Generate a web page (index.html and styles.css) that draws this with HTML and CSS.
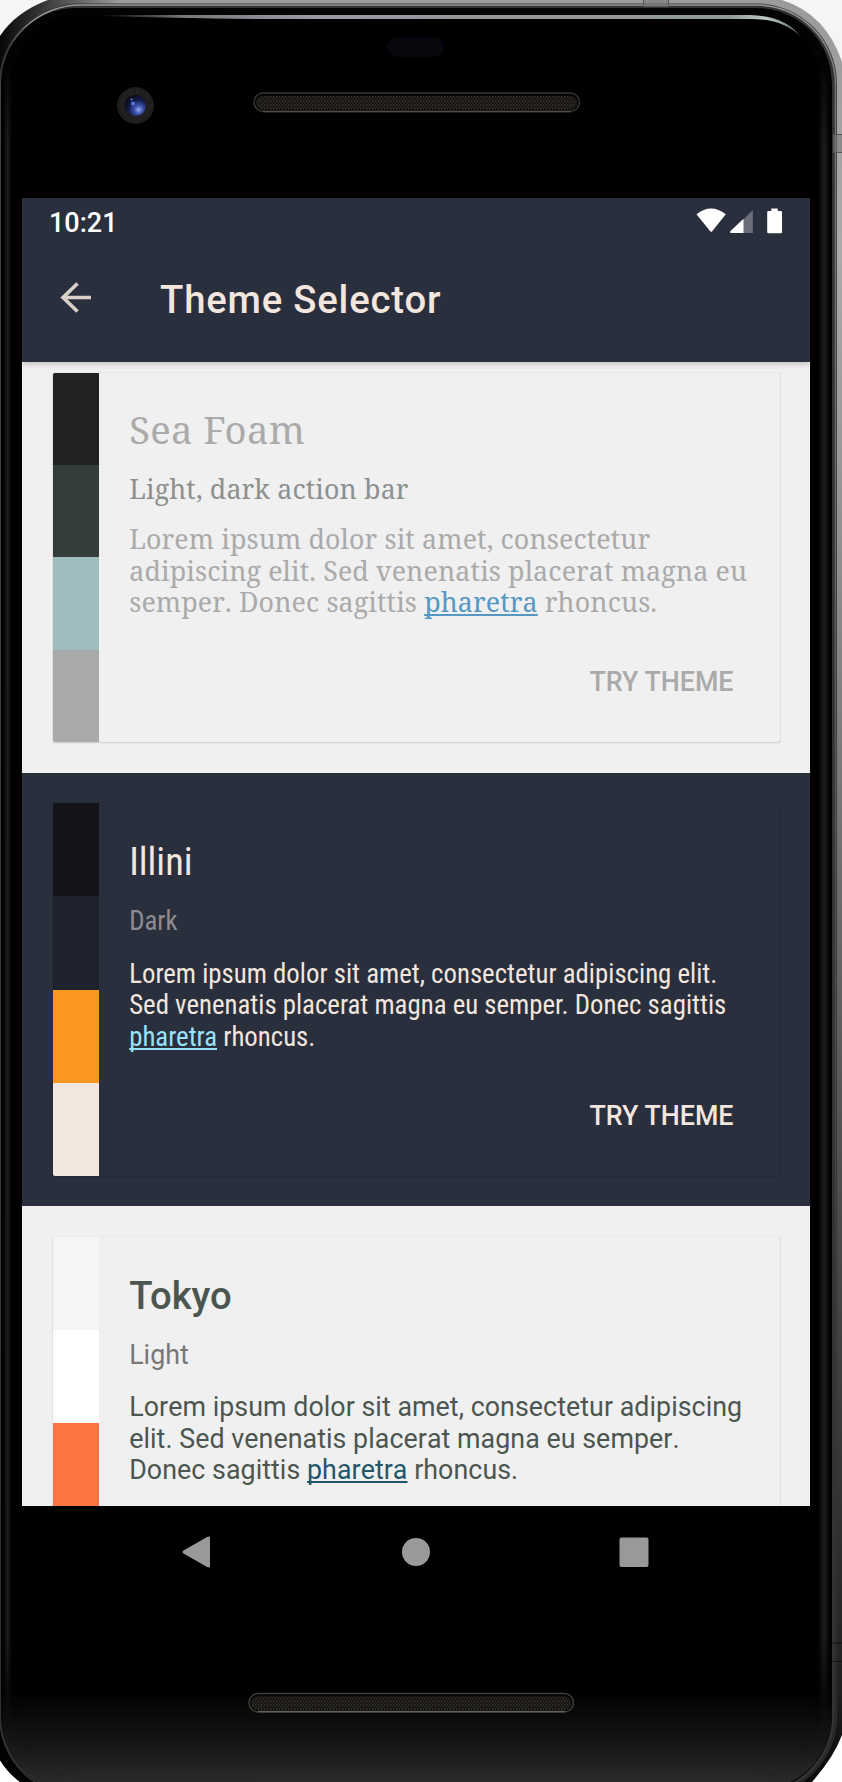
FILE: index.html
```html
<!DOCTYPE html>
<html lang="en">
<head>
<meta charset="utf-8">
<title>Theme Selector</title>
<link rel="stylesheet" href="styles.css">
</head>
<body>
<main class="phone">
  <svg class="frame" viewBox="0 0 842 1782" aria-hidden="true">
    <defs>
      <linearGradient id="metal" x1="0" y1="0" x2="0" y2="1782" gradientUnits="userSpaceOnUse">
        <stop offset="0" stop-color="#999b9c"/><stop offset=".14" stop-color="#aaa"/><stop offset=".3" stop-color="#919191"/><stop offset=".5" stop-color="#6c6c6c"/><stop offset=".65" stop-color="#505050"/><stop offset=".83" stop-color="#353535"/><stop offset=".95" stop-color="#202020"/><stop offset="1" stop-color="#080808"/>
      </linearGradient>
      <linearGradient id="shade" x1="0" y1="0" x2="120" y2="0" gradientUnits="userSpaceOnUse">
        <stop offset="0" stop-color="#000" stop-opacity=".95"/><stop offset=".3" stop-color="#000" stop-opacity=".7"/><stop offset="1" stop-color="#000" stop-opacity="0"/>
      </linearGradient>
      <linearGradient id="rim" x1="0" y1="0" x2="0" y2="1782" gradientUnits="userSpaceOnUse">
        <stop offset="0" stop-color="#999"/><stop offset=".05" stop-color="#777"/><stop offset=".12" stop-color="#777"/><stop offset="1" stop-color="#222"/>
      </linearGradient>
      <linearGradient id="chin" x1="0" y1="1690" x2="0" y2="1782" gradientUnits="userSpaceOnUse">
        <stop offset="0" stop-color="#000"/><stop offset=".6" stop-color="#161616"/><stop offset="1" stop-color="#2b2b2b"/>
      </linearGradient>
      <linearGradient id="side">
        <stop offset="0" stop-color="#000"/><stop offset=".5" stop-color="#1d1d1d"/><stop offset="1" stop-color="#000"/>
      </linearGradient>
      <linearGradient id="fade" x1="0" y1="60" x2="0" y2="1720" gradientUnits="userSpaceOnUse">
        <stop offset="0" stop-color="#000"/><stop offset=".05" stop-color="#fff"/><stop offset=".95" stop-color="#fff"/><stop offset="1" stop-color="#000"/>
      </linearGradient>
      <mask id="ends" maskUnits="userSpaceOnUse" x="0" y="0" width="842" height="1782"><rect width="842" height="1782" fill="url(#fade)"/></mask>
      <linearGradient id="shine" x1="100" y1="0" x2="800" y2="0" gradientUnits="userSpaceOnUse">
        <stop offset="0" stop-color="#000"/><stop offset=".12" stop-color="#777b7f"/><stop offset=".3" stop-color="#96999d"/><stop offset=".9" stop-color="#92979a"/><stop offset=".95" stop-color="#bcc8c6"/><stop offset="1" stop-color="#677"/>
      </linearGradient>
      <radialGradient id="lens" cx=".65" cy=".7" r=".75">
        <stop offset="0" stop-color="#9aaaf0"/><stop offset=".25" stop-color="#4357b5"/><stop offset=".6" stop-color="#141d50"/><stop offset="1" stop-color="#060812"/>
      </radialGradient>
      <pattern id="mesh" width="3" height="4" patternUnits="userSpaceOnUse">
        <rect width="3" height="4" fill="#14120f"/><rect width="1.3" height="1.6" fill="#3c3933"/><rect x="1.5" y="2" width="1.3" height="1.5" fill="#322f2a"/>
      </pattern>
      <filter id="soft" x="-20%" y="-5%" width="140%" height="110%"><feGaussianBlur stdDeviation="5"/></filter>
      <clipPath id="face"><rect x="1" y="8" width="831" height="1782" rx="75"/></clipPath>
    </defs>
    <rect width="842" height="900" fill="#f5f5f5"/>
    <rect y="900" width="842" height="882" fill="#fff"/>
    <path fill="url(#metal)" d="M0 36Q16 12 48 0H782Q826 14 842 62V1735Q834 1757 812 1782H20Q7 1772 0 1760Z"/>
    <path fill="url(#shade)" d="M0 36Q16 12 48 0H120V1782H20Q7 1772 0 1760Z"/>
    <rect x="1.5" y="6" width="833" height="1788" rx="78" fill="none" stroke="#333" stroke-width="5"/>
    <rect x="1.500" y="5" width="834" height="1790" rx="79" fill="none" stroke="url(#rim)" stroke-width="1.500"/>
    <g clip-path="url(#face)">
      <rect width="842" height="1782"/>
      <rect y="1690" width="842" height="92" fill="url(#chin)"/>
      <rect x="7" y="10" width="818" height="1776" rx="70" fill="none" stroke="#292929" stroke-width="4" filter="url(#soft)" opacity=".25"/>
      <g mask="url(#ends)">
        <rect x="3" y="60" width="9" height="1660" fill="url(#side)"/>
        <rect x="818" y="60" width="12" height="1660" fill="url(#side)"/>
      </g>
    </g>
    <path fill="url(#shine)" d="M100 15H750Q785 16 800 36Q783 19 750 19H260Q170 18 100 16Z"/>
    <path stroke="#555" stroke-width="1" d="M643.500 0V7M668.500 0V7M833 134.500H842M833 152.500H842"/>
    <path fill="#777" opacity=".55" d="M644 0H668V7H644ZM833 135H842V152H833Z"/>
    <path stroke="#111" d="M833 1643H842M833 1661.500H842"/>
    <rect x="387" y="37" width="57" height="20" rx="10" fill="#07080d"/>
    <circle cx="135.500" cy="105.500" r="18.500" fill="#1e1c1d"/>
    <circle cx="135.500" cy="105.500" r="14" fill="none" stroke="#29272a" stroke-width="4" stroke-dasharray="1 2"/>
    <circle cx="135.500" cy="105.500" r="10.500" fill="url(#lens)"/>
    <circle cx="133" cy="103.500" r="2" fill="#5572d8"/><circle cx="131.500" cy="99.500" r="1" fill="#6d84c8"/>
    <g fill="url(#mesh)" stroke-width="1.500">
      <rect x="254" y="93" width="325.500" height="18.500" rx="9.200" fill="#050505" stroke="#363531"/>
      <rect x="256" y="96" width="321" height="13.500" rx="6.700"/>
      <path d="M263 111.500H571" stroke="#504d45"/>
      <rect x="249" y="1693.500" width="324.500" height="18.500" rx="9.200" fill="#050505" stroke="#3d3c39"/>
      <rect x="251" y="1696.500" width="320" height="13.500" rx="6.700"/>
      <path d="M258 1711.500H565" stroke="#62625b"/>
    </g>
  </svg>
  <section class="screen">
    <header class="appbar">
      <div class="status">
        <span class="clock">10:21</span>
        <svg class="status-icons" viewBox="0 0 90 28" fill="#fff">
          <path d="M.5 6.300Q15-5.300 29.800 6.300L16.200 23.200Q15.200 24.300 14.200 23.200Z"/>
          <path d="M56.800 2V25H34Z" fill="#6b6e78"/><path d="M47.500 10.800V25H34.800Q33.300 24 34.800 22.800Z"/>
          <path d="M75.300.5H81.700V3H84.800Q86 3 86 4.200V24Q86 25.200 84.800 25.200H72.400Q71.200 25.200 71.200 24V4.200Q71.200 3 72.400 3H75.300Z"/>
        </svg>
      </div>
      <div class="toolbar">
        <svg class="back" viewBox="0 0 32 32" fill="none" stroke="#d9d0ca" stroke-width="3.600"><path d="M31 15.500H3M17.500 1.500L3 15.500L17.500 29.500"/></svg>
        <h1 class="heading">Theme Selector</h1>
      </div>
    </header>
    <div class="list">
      <section class="item sea">
        <article class="card">
          <div class="swatches"><i></i><i></i><i></i><i></i></div>
          <div class="content">
            <h2 class="title">Sea Foam</h2>
            <p class="kind">Light, dark action bar</p>
            <p class="sample">Lorem ipsum dolor sit amet, consectetur<br>adipiscing elit. Sed venenatis placerat magna eu<br>semper. Donec sagittis <a>pharetra</a> rhoncus.</p>
            <div class="action">TRY THEME</div>
          </div>
        </article>
      </section>
      <section class="item illini">
        <article class="card">
          <div class="swatches"><i></i><i></i><i></i><i></i></div>
          <div class="content">
            <h2 class="title">Illini</h2>
            <p class="kind">Dark</p>
            <p class="sample">Lorem ipsum dolor sit amet, consectetur adipiscing elit.<br>Sed venenatis placerat magna eu semper. Donec sagittis<br><a>pharetra</a> rhoncus.</p>
            <div class="action">TRY THEME</div>
          </div>
        </article>
      </section>
      <section class="item tokyo">
        <article class="card">
          <div class="swatches"><i></i><i></i><i></i><i></i></div>
          <div class="content">
            <h2 class="title">Tokyo</h2>
            <p class="kind">Light</p>
            <p class="sample">Lorem ipsum dolor sit amet, consectetur adipiscing<br>elit. Sed venenatis placerat magna eu semper.<br>Donec sagittis <a>pharetra</a> rhoncus.</p>
          </div>
        </article>
      </section>
    </div>
  </section>
  <nav class="navbar">
    <svg viewBox="0 0 32 32" fill="#999"><path d="M1.500 14.500Q-.5 16 1.500 17.500L25.500 31.300Q28 32 28 30V2Q28 0 25.500.7Z"/></svg>
    <svg viewBox="0 0 32 32" fill="#999"><circle cx="16" cy="16" r="14"/></svg>
    <svg viewBox="0 0 32 32" fill="#999"><rect x="1.500" y="1.500" width="29" height="29.500" rx="2"/></svg>
  </nav>
</main>
</body>
</html>
```
FILE: styles.css
```css
* { box-sizing: border-box; }
body { margin: 0; font-family: Roboto, sans-serif; }
h1, h2, p { margin: 0; font-weight: 400; }
.phone { position: relative; width: 842px; height: 1782px; padding: 198px 32px 0 22px; overflow: hidden; background: #fff; }
.frame { position: absolute; inset: 0; width: 842px; height: 1782px; }
.screen { position: relative; display: flex; flex-direction: column; height: 1308px; overflow: hidden; background: #f0f0f0; }
.appbar { position: relative; z-index: 1; height: 164px; flex: none; background: #2a2f3d; box-shadow: 0 2px 6px rgba(0,0,0,.2); }
.status { display: flex; justify-content: space-between; height: 47px; padding: 10px 24px 0 27px; }
.clock { color: #fff; font-size: 27px; line-height: 30px; font-weight: 500; }
.status-icons { width: 90px; height: 28px; }
.toolbar { display: flex; align-items: center; height: 107px; padding-left: 38px; }
.back { width: 32px; height: 32px; margin-bottom: 1px; }
.heading { margin: 2px 0 0 68px; color: #f3e6de; font-size: 38.3px; line-height: 46px; font-weight: 500; letter-spacing: .8px; }
.list { display: flex; flex-direction: column; padding-top: 10.700px; }
.item { padding: 30.500px 30.500px 30.500px; }
.sea { padding-top: 0; height: 400px; }
.illini { height: 433.600px; background: #2a2f3d; }
.card { display: flex; height: 373px; border-radius: 2px; box-shadow: 0 1px 2px rgba(0,0,0,.14), 0 0 1px rgba(0,0,0,.25); }
.sea .card { height: 369.300px; }
.swatches { display: grid; grid-template-rows: repeat(4, 1fr); width: 46.200px; flex: none; overflow: hidden; border-radius: 2px 0 0 2px; }
.content { display: flex; flex-direction: column; flex: 1; min-width: 0; padding: 36px 46px 0 30.500px; white-space: nowrap; }
.title { font-size: 38.3px; line-height: 46px; }
.kind { margin-top: 20px; font-size: 26.8px; line-height: 32px; }
.sample { margin-top: 21.600px; font-size: 26.8px; line-height: 31.400px; }
.sample a { text-decoration: underline; text-decoration-thickness: 1.500px; text-underline-offset: 2px; text-decoration-skip-ink: none; }
.action { align-self: flex-end; margin-top: 47.100px; font-size: 26.8px; line-height: 32px; font-weight: 500; }
.sea .title, .sea .kind, .sea .sample { font-family: "Noto Serif", "DejaVu Serif Condensed", "DejaVu Serif", serif; letter-spacing: .12px; }
.sea .sample, .tokyo .sample { font-kerning: none; }
.sea { color: #aaa; }
.sea .content { padding-top: 33.500px; }
.sea .title { letter-spacing: .3px; }
.sea .kind { margin-top: 20.500px; color: #8c908e; }
.sea .sample { margin-top: 18.800px; }
.sea .action { margin-top: 48.200px; }
.sea a { color: #5797c4; }
.sea i:nth-child(1) { background: #222; }
.sea i:nth-child(2) { background: #353d38; }
.sea i:nth-child(3) { background: #9fbcbf; }
.sea i:nth-child(4) { background: #a9a9a9; }
.illini { color: #f3e6de; }
.illini .title, .illini .kind, .illini .sample { font-family: "Roboto Condensed", Roboto, sans-serif; font-stretch: 75%; }
.illini .kind { color: #8f8b8e; }
.illini a { color: #98e2fb; }
.illini i:nth-child(1) { background: #121419; }
.illini i:nth-child(2) { background: #1e222c; }
.illini i:nth-child(3) { background: #fa9720; }
.illini i:nth-child(4) { background: #f3e6de; }
.tokyo { color: #4c5651; }
.tokyo .title { font-weight: 500; }
.tokyo .kind { color: #777; }
.tokyo .sample { letter-spacing: .05px; }
.tokyo a { color: #235669; }
.tokyo i:nth-child(1) { background: #f5f5f5; }
.tokyo i:nth-child(2) { background: #fff; }
.tokyo i:nth-child(3) { background: #fb7442; }
.tokyo i:nth-child(4) { background: #4c5651; }
.navbar { position: relative; display: flex; justify-content: center; gap: 186px; padding: 30px 1px 0 0; }
.navbar svg { width: 32px; height: 32px; }
```
